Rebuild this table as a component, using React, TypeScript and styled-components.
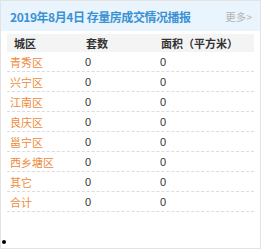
import React from "react";
import styled, { createGlobalStyle } from "styled-components";

const GlobalStyle = createGlobalStyle`
  html, body {
    margin: 0;
    padding: 0;
    background: #ffffff;
  }
  body {
    font-family: "Liberation Sans", "Noto Sans CJK SC", sans-serif;
  }
`;

const rows = [
  { name: "青秀区", count: "0", area: "0" },
  { name: "兴宁区", count: "0", area: "0" },
  { name: "江南区", count: "0", area: "0" },
  { name: "良庆区", count: "0", area: "0" },
  { name: "邕宁区", count: "0", area: "0" },
  { name: "西乡塘区", count: "0", area: "0" },
  { name: "其它", count: "0", area: "0" },
  { name: "合计", count: "0", area: "0" },
];

const App = () => {
  return (
    <>
      <GlobalStyle />
      <Panel>
        <Header>
          <Title>2019年8月4日 存量房成交情况播报</Title>
          <More>更多&gt;</More>
        </Header>
        <Body>
          <HeadRow>
            <HeadCell>城区</HeadCell>
            <HeadCell>套数</HeadCell>
            <HeadCell>面积（平方米）</HeadCell>
          </HeadRow>
          {rows.map((r) => (
            <Row key={r.name}>
              <NameCell>{r.name}</NameCell>
              <Cell>{r.count}</Cell>
              <Cell>{r.area}</Cell>
            </Row>
          ))}
        </Body>
        <Bullet />
      </Panel>
    </>
  );
};

export default App;

const Panel = styled.div`
  position: relative;
  width: 259px;
  height: 247px;
  border: 1px solid #e3e3e3;
  background: #fff;
`;

const Header = styled.div`
  display: flex;
  align-items: center;
  justify-content: space-between;
  height: 30px;
  padding: 0 8px 0 9px;
  background: #e9f4fc;
`;

const Title = styled.div`
  font-family: "Noto Sans CJK SC", sans-serif;
  font-size: 12px;
  font-weight: 700;
  color: #3a92d4;
  letter-spacing: -0.45px;
`;

const More = styled.div`
  font-family: "Noto Sans CJK SC", sans-serif;
  font-size: 10.5px;
  color: #b5b5b5;
`;

const Body = styled.div`
  padding: 3px 6px 0 6px;
`;

const Grid = styled.div`
  display: grid;
  grid-template-columns: 72px 75px 1fr;
`;

const HeadRow = styled(Grid)`
  height: 18px;
  align-items: center;
  background: #f4f4f4;
`;

const Row = styled(Grid)`
  height: 19px;
  align-items: center;
  border-bottom: 1px dashed #dcdcdc;
`;

const HeadCell = styled.div`
  font-family: "Noto Sans CJK SC", sans-serif;
  font-size: 11px;
  font-weight: 700;
  color: #333;
  padding-left: 7px;
`;

const Cell = styled.div`
  font-family: "Liberation Sans", sans-serif;
  font-size: 11px;
  color: #333;
  padding-left: 6px;
`;

const NameCell = styled.div`
  font-family: "Noto Sans CJK SC", sans-serif;
  font-size: 11px;
  color: #ee8a3c;
  padding-left: 3px;
`;

const Bullet = styled.span`
  position: absolute;
  left: 1px;
  bottom: 4px;
  width: 4px;
  height: 4px;
  border-radius: 50%;
  background: #000;
`;
